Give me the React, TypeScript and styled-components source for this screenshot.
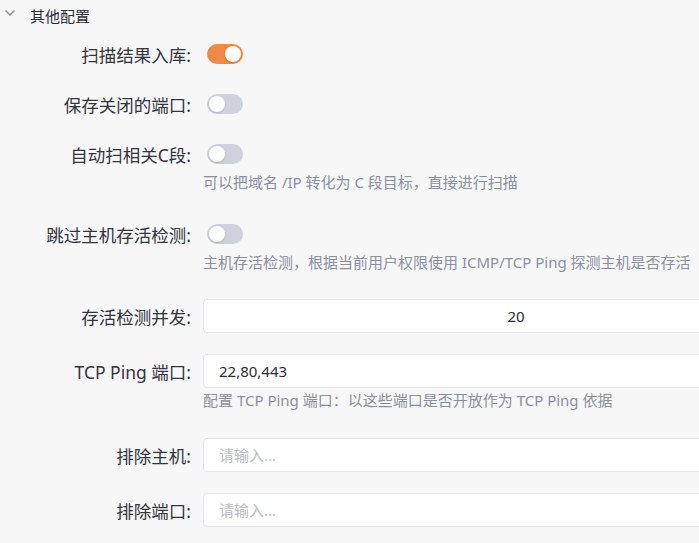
import React, { useState } from "react";
import styled, { createGlobalStyle } from "styled-components";

const GlobalStyle = createGlobalStyle`
  html, body {
    margin: 0;
    padding: 0;
    background: #f7f7f8;
  }
  body {
    font-family: "Noto Sans", "Noto Sans CJK SC", sans-serif;
    color: #2b2d3a;
    overflow: hidden;
  }
`;

const Root = styled.div`
  width: 699px;
  height: 543px;
  overflow: hidden;
  background: #f7f7f8;
`;

const Header = styled.div`
  display: flex;
  align-items: center;
  height: 30px;
  padding-left: 4px;
  font-size: 15px;
  color: #2b2d3a;
`;

const Chevron = styled.svg`
  width: 12px;
  height: 12px;
  margin-right: 14px;
  margin-top: -4px;
`;

const Form = styled.div`
  display: flex;
  flex-direction: column;
  padding-top: 8px;
`;

const Item = styled.div<{ $mb: number }>`
  display: flex;
  flex-direction: column;
  margin-bottom: ${(p) => p.$mb}px;
`;

const Row = styled.div<{ $h: number }>`
  display: flex;
  align-items: center;
  height: ${(p) => p.$h}px;
`;

const Label = styled.div`
  box-sizing: border-box;
  width: 195px;
  flex-shrink: 0;
  margin-right: 8px;
  padding-right: 4px;
  text-align: right;
  font-size: 17.5px;
  white-space: nowrap;
  color: #33353f;
`;

const Desc = styled.div`
  margin: 1px 0 6px 203px;
  font-size: 15px;
  line-height: 22px;
  color: #8b8fa3;
  white-space: nowrap;
`;

const SwitchTrack = styled.button<{ $on: boolean }>`
  position: relative;
  width: 36px;
  height: 20px;
  margin-left: 4px;
  padding: 0;
  border: none;
  border-radius: 10px;
  background: ${(p) => (p.$on ? "#f08a44" : "#cdd2de")};
  cursor: pointer;
  flex-shrink: 0;
`;

const SwitchKnob = styled.span<{ $on: boolean }>`
  position: absolute;
  top: 2px;
  left: ${(p) => (p.$on ? "18px" : "2px")};
  width: 16px;
  height: 16px;
  border-radius: 50%;
  background: #fff;
  box-shadow: 0 1px 2px rgba(0, 0, 0, 0.15);
`;

const Input = styled.input<{ $center?: boolean }>`
  box-sizing: border-box;
  flex-shrink: 0;
  width: 626px;
  height: 34px;
  padding: 0 15px;
  border: 1px solid #e3e5ec;
  border-radius: 4px;
  background: #fff;
  font-family: "Noto Sans", "Noto Sans CJK SC", sans-serif;
  font-size: 15px;
  color: #2b2d3a;
  outline: none;
  text-align: ${(p) => (p.$center ? "center" : "left")};
  &::placeholder {
    color: #b9bcc7;
  }
`;

const Switch = ({ initial }: { initial: boolean }) => {
  const [on, setOn] = useState(initial);
  return (
    <SwitchTrack $on={on} onClick={() => setOn(!on)}>
      <SwitchKnob $on={on} />
    </SwitchTrack>
  );
};

export default function App() {
  return (
    <Root>
      <GlobalStyle />
      <Header>
        <Chevron viewBox="0 0 12 12">
          <polyline
            points="2,4 6,8 10,4"
            fill="none"
            stroke="#8a8fa0"
            strokeWidth="1.6"
            strokeLinecap="round"
            strokeLinejoin="round"
          />
        </Chevron>
        其他配置
      </Header>
      <Form>
        <Item $mb={18}>
          <Row $h={32}>
            <Label>扫描结果入库:</Label>
            <Switch initial={true} />
          </Row>
        </Item>
        <Item $mb={18}>
          <Row $h={32}>
            <Label>保存关闭的端口:</Label>
            <Switch initial={false} />
          </Row>
        </Item>
        <Item $mb={19}>
          <Row $h={32}>
            <Label>自动扫相关C段:</Label>
            <Switch initial={false} />
          </Row>
          <Desc>可以把域名 /IP 转化为 C 段目标，直接进行扫描</Desc>
        </Item>
        <Item $mb={20}>
          <Row $h={32}>
            <Label>跳过主机存活检测:</Label>
            <Switch initial={false} />
          </Row>
          <Desc>主机存活检测，根据当前用户权限使用 ICMP/TCP Ping 探测主机是否存活</Desc>
        </Item>
        <Item $mb={21}>
          <Row $h={34}>
            <Label>存活检测并发:</Label>
            <Input $center defaultValue="20" />
          </Row>
        </Item>
        <Item $mb={21}>
          <Row $h={34}>
            <Label>TCP Ping 端口:</Label>
            <Input defaultValue="22,80,443" />
          </Row>
          <Desc>配置 TCP Ping 端口：以这些端口是否开放作为 TCP Ping 依据</Desc>
        </Item>
        <Item $mb={21}>
          <Row $h={34}>
            <Label>排除主机:</Label>
            <Input placeholder="请输入..." />
          </Row>
        </Item>
        <Item $mb={21}>
          <Row $h={34}>
            <Label>排除端口:</Label>
            <Input placeholder="请输入..." />
          </Row>
        </Item>
      </Form>
    </Root>
  );
}
